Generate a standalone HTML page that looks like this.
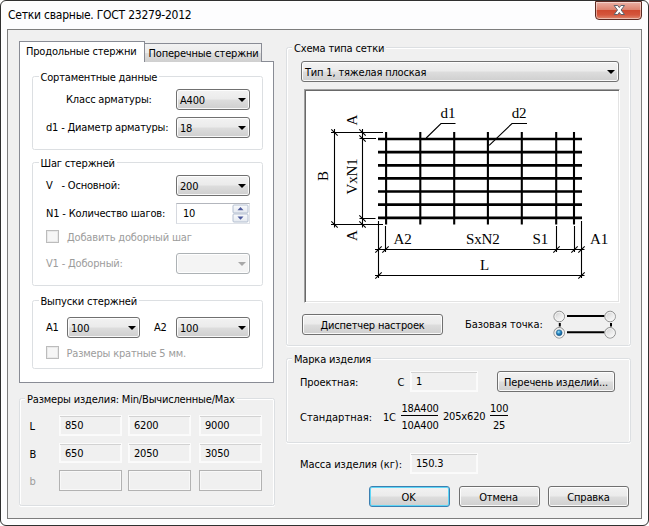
<!DOCTYPE html>
<html lang="ru"><head><meta charset="utf-8"><title>Сетки сварные. ГОСТ 23279-2012</title>
<style>
html,body{margin:0;padding:0;}
body{width:649px;height:526px;overflow:hidden;background:#fff;position:relative;font-family:"DejaVu Sans Condensed","Liberation Sans",sans-serif;font-size:11px;letter-spacing:-0.18px;color:#000;}
*{box-sizing:border-box;}
.abs,.t,.gb,.gl,.cb,.ed,.btn,.chk,.ro,.rd{position:absolute;}
#win{left:0;top:0;width:649px;height:526px;border-radius:6px;background:#fdfdfe;border:1px solid #303030;box-shadow:inset 0 0 0 1px #fff;}
#client{left:7px;top:29px;width:635px;height:490px;background:#f0f0f0;border:1px solid #7d7d7d;}
#title{left:8px;top:8px;font-size:12px;letter-spacing:-0.24px;white-space:nowrap;color:#000;}
.t{white-space:nowrap;line-height:13px;}
.dis{color:#9c9c9c;}
.gb{border:1px solid #dcdfe2;border-radius:2.5px;box-shadow:inset 1px 1px 0 #fff, inset -1px 0 0 #fff, 0 1px 0 #fff;}
.gl{white-space:nowrap;line-height:13px;padding:0 2px;}
.cb{border:1px solid #707070;border-radius:3px;background:linear-gradient(#f2f2f2 0%,#ebebeb 48%,#dddddd 52%,#cfcfcf 100%);box-shadow:inset 0 0 0 1px rgba(255,255,255,.85);padding-left:3px;line-height:21px;white-space:nowrap;}
.cb i{position:absolute;right:3.5px;top:8px;width:0;height:0;border-left:4px solid transparent;border-right:4px solid transparent;border-top:4.5px solid #000;}
.cb.d{border-color:#adb2b5;background:#f4f4f4;}
.cb.d i{border-top-color:#a8a8a8;}
.ed{border:1px solid #dfe2e8;border-top-color:#b3b6bd;border-left-color:#d6d9df;background:#fff;padding-left:6px;line-height:20px;white-space:nowrap;}
.ro{border:1px solid #fbfbfb;background:#f0f0f0;box-shadow:inset 0 1px 0 0 #d2d2d2, inset 0 0 0 1px #fafafa;padding-left:5px;line-height:20px;white-space:nowrap;}
.rd{border:1px solid #b2b2b2;background:#f0f0f0;box-shadow:inset 0 0 0 1px #f8f8f8;}
.btn{border:1px solid #707070;border-radius:3px;background:linear-gradient(#f2f2f2 0%,#ebebeb 48%,#dddddd 52%,#cfcfcf 100%);box-shadow:inset 0 0 0 1px rgba(255,255,255,.85);text-align:center;line-height:21px;white-space:nowrap;}
.btn.def{border-color:#3c7fb1;box-shadow:inset 0 0 0 1px #5fd6f6;}
.chk{width:13px;height:13px;border:1px solid #bcbcbc;background:#f6f6f6;box-shadow:inset 0 0 0 1px #e9e9e9;}
</style></head><body>
<div id="win" class="abs"></div>
<div id="title" class="abs">Сетки сварные. ГОСТ 23279-2012</div>
<div id="close" class="abs" style="left:595px;top:1px;width:47px;height:19px;border:1px solid #5c2a22;border-radius:0 0 4px 4px;background:linear-gradient(#e9b0a4 0%,#dd8470 45%,#cf4a30 50%,#d4553c 75%,#e08a70 100%);box-shadow:inset 0 0 0 1px rgba(255,255,255,.45);">
<svg width="45" height="18" style="position:absolute;left:0;top:0"><path d="M18.10 3.50h3.6L23.30 5.62L24.90 3.50h3.6L25.10 8.00L28.50 12.50h-3.6L23.30 10.38L21.70 12.50h-3.6L21.50 8.00Z" fill="#fff" stroke="#5d626c" stroke-width="1"/></svg></div>
<div id="client" class="abs"></div>

<!-- left tab control -->
<div class="abs" id="pane" style="left:19px;top:61px;width:255px;height:322px;background:#fff;border:1px solid #898c95;"></div>
<div class="abs" id="tab2" style="left:144px;top:43px;width:118px;height:19px;border:1px solid #898c95;border-bottom:none;background:linear-gradient(#f2f2f2 0%,#ebebeb 50%,#dddddd 50%,#cfcfcf 100%);"></div>
<div class="abs" id="tab1" style="left:19px;top:41px;width:126px;height:21px;border:1px solid #898c95;border-bottom:none;background:#fff;"></div>
<div class="t" style="left:26px;top:45px;">Продольные стержни</div>
<div class="t" style="left:148.5px;top:47px;">Поперечные стержни</div>

<div class="gb" style="left:32px;top:76px;width:231px;height:74px;"></div>
<div class="gl" style="left:38.5px;top:71px;background:#fff;">Сортаментные данные</div>
<div class="t" style="left:66px;top:92.5px;">Класс арматуры:</div>
<div class="cb" style="left:176px;top:89px;width:74px;height:21px;">A400<i></i></div>
<div class="t" style="left:46px;top:120.5px;">d1 - Диаметр арматуры:</div>
<div class="cb" style="left:176px;top:117px;width:74px;height:21px;">18<i></i></div>

<div class="gb" style="left:32px;top:162px;width:231px;height:124px;"></div>
<div class="gl" style="left:38.5px;top:157px;background:#fff;">Шаг стержней</div>
<div class="t" style="left:46px;top:179px;">V&nbsp;&nbsp; - Основной:</div>
<div class="cb" style="left:176px;top:175px;width:74px;height:21px;">200<i></i></div>
<div class="t" style="left:46px;top:207px;">N1 - Количество шагов:</div>
<div class="ed" style="left:176px;top:203px;width:74px;height:21px;">10</div>
<svg class="abs" id="spin" style="left:231px;top:203px;" width="19" height="21" viewBox="231 203 19 21">
<defs><linearGradient id="sg" x1="0" y1="0" x2="0" y2="1"><stop offset="0" stop-color="#fafbfd"/><stop offset="1" stop-color="#e3e8ef"/></linearGradient></defs>
<rect x="233" y="205" width="15" height="8" rx="1" fill="url(#sg)" stroke="#b4bfd0" stroke-width="1"/>
<rect x="233" y="214" width="15" height="8" rx="1" fill="url(#sg)" stroke="#b4bfd0" stroke-width="1"/>
<path d="M237.5 210.3h6l-3-3.2zM237.5 216.5h6l-3 3.2z" fill="#4d5a9c"/>
</svg>
<div class="chk" style="left:46px;top:230px;"></div>
<div class="t dis" style="left:67px;top:231px;">Добавить доборный шаг</div>
<div class="t dis" style="left:46px;top:256.5px;">V1 - Доборный:</div>
<div class="cb d" style="left:176px;top:253px;width:74px;height:21px;"><i></i></div>

<div class="gb" style="left:32px;top:300px;width:231px;height:69px;"></div>
<div class="gl" style="left:38.5px;top:295px;background:#fff;">Выпуски стержней</div>
<div class="t" style="left:46px;top:321px;">A1</div>
<div class="cb" style="left:67px;top:317px;width:73px;height:21px;">100<i></i></div>
<div class="t" style="left:154px;top:321px;">A2</div>
<div class="cb" style="left:176px;top:317px;width:74px;height:21px;">100<i></i></div>
<div class="chk" style="left:46px;top:346px;"></div>
<div class="t dis" style="left:66.5px;top:347px;">Размеры кратные 5 мм.</div>

<!-- sizes group -->
<div class="gb" style="left:19px;top:398px;width:256px;height:108px;"></div>
<div class="gl" style="left:25px;top:393px;background:#f0f0f0;">Размеры изделия: Min/Вычисленные/Max</div>
<div class="t" style="left:29.5px;top:420px;">L</div>
<div class="t" style="left:29.5px;top:447.5px;">B</div>
<div class="t dis" style="left:29.5px;top:475px;">b</div>
<div class="ro" style="left:59px;top:415px;width:63px;height:21px;">850</div>
<div class="ro" style="left:128px;top:415px;width:63px;height:21px;">6200</div>
<div class="ro" style="left:199px;top:415px;width:63px;height:21px;">9000</div>
<div class="ro" style="left:59px;top:443px;width:63px;height:20px;">650</div>
<div class="ro" style="left:128px;top:443px;width:63px;height:20px;">2050</div>
<div class="ro" style="left:199px;top:443px;width:63px;height:20px;">3050</div>
<div class="rd" style="left:59px;top:470px;width:63px;height:21px;"></div>
<div class="rd" style="left:128px;top:470px;width:63px;height:21px;"></div>
<div class="rd" style="left:199px;top:470px;width:63px;height:21px;"></div>

<!-- right: scheme group -->
<div class="gb" style="left:286px;top:47px;width:345px;height:299px;"></div>
<div class="gl" style="left:292px;top:42px;background:#f0f0f0;">Схема типа сетки</div>
<div class="cb" style="left:301px;top:61px;width:318px;height:21px;">Тип 1, тяжелая плоская<i></i></div>
<div class="abs" id="pic" style="left:304px;top:89px;width:316px;height:214px;background:#fff;border:1px solid;border-color:#a0a0a0 #fff #fff #a0a0a0;box-shadow:inset 1px 1px 0 #696969, inset -1px -1px 0 #e3e3e3;"></div>
<svg class="abs" id="draw" style="left:304px;top:89px;" width="315" height="214" viewBox="304 89 315 214" font-family="'Liberation Serif',serif" font-size="15px" fill="#000">
<g stroke="#000" stroke-width="2.7" fill="none">
<path d="M378 139.0H582"/><path d="M378 152.1H582"/><path d="M378 165.3H582"/><path d="M378 178.4H582"/><path d="M378 191.5H582"/><path d="M378 204.7H582"/><path d="M378 217.8H582"/></g>
<g stroke="#000" stroke-width="2.1" fill="none"><path d="M386.1 132V224.5"/><path d="M420.3 132V224.5"/><path d="M454.2 132V224.5"/><path d="M487.9 132V224.5"/><path d="M521.8 132V224.5"/><path d="M556.2 132V224.5"/><path d="M574 132V224.5"/></g>
<g stroke="#000" stroke-width="1.1" fill="none"><path d="M331 132.5H383M359.5 138.5H376M359.5 218.5H375.5M331 224.5H383"/><path d="M334.5 129V227.5M362.5 129V227.5"/><path d="M426.2 138L441 123.5H455.5M489.2 145.4L512 123.5H527"/><path d="M378.5 221V278M385.5 226V252M556.5 226V252M574.5 226V252M581.5 221V278"/><path d="M375 249.5H584.5M375 275.5H584.5"/><path d="M331.3 129.3L337.7 135.7"/><path d="M359.3 129.3L365.7 135.7"/><path d="M359.3 135.3L365.7 141.7"/><path d="M359.3 215.3L365.7 221.7"/><path d="M359.3 221.3L365.7 227.7"/><path d="M331.3 221.3L337.7 227.7"/><path d="M375.3 252.7L381.7 246.3"/><path d="M382.3 252.7L388.7 246.3"/><path d="M553.3 252.7L559.7 246.3"/><path d="M571.3 252.7L577.7 246.3"/><path d="M578.3 252.7L584.7 246.3"/><path d="M375.3 278.7L381.7 272.3"/><path d="M578.3 278.7L584.7 272.3"/></g>
<text x="440.6" y="117.7">d1</text><text x="511.8" y="117.7">d2</text><text x="393.5" y="243.8">A2</text><text x="466" y="243.8">SxN2</text><text x="532.5" y="243.8">S1</text><text x="590" y="243.8">A1</text><text x="480" y="269.8">L</text><text transform="translate(356.8 125.6) rotate(-90)">A</text><text transform="translate(356.8 241) rotate(-90)">A</text><text transform="translate(328.4 181) rotate(-90)">B</text><text transform="translate(356.8 194.5) rotate(-90)">VxN1</text></svg>
<svg class="abs" id="radio" style="left:550px;top:308px;" width="70" height="34" viewBox="550 308 70 34">
<defs><linearGradient id="rg" x1="0" y1="0" x2="0.7" y2="1"><stop offset="0" stop-color="#c4c4c4"/><stop offset="0.5" stop-color="#e6e6e6"/><stop offset="1" stop-color="#fbfbfb"/></linearGradient>
<radialGradient id="bd" cx="0.4" cy="0.35" r="0.7"><stop offset="0" stop-color="#a6e6fb"/><stop offset="0.45" stop-color="#2a8ac4"/><stop offset="1" stop-color="#0d4f86"/></radialGradient></defs>
<g stroke="#000" stroke-width="2" fill="none"><path d="M567 316H604.5M567 332.3H604.5"/><path d="M559.8 323V326.4M611 323V326.4"/></g>
<g stroke="#8e8f8f" stroke-width="1" fill="url(#rg)"><circle cx="559.2" cy="316.5" r="5.3"/><circle cx="610.1" cy="316.5" r="5.3"/><circle cx="559.2" cy="332.8" r="5.3"/><circle cx="610.1" cy="332.8" r="5.3"/></g>
<g stroke="#f4f4f4" stroke-width="1" fill="none"><circle cx="559.2" cy="316.5" r="4.2"/><circle cx="610.1" cy="316.5" r="4.2"/><circle cx="559.2" cy="332.8" r="4.2"/><circle cx="610.1" cy="332.8" r="4.2"/></g>
<circle cx="559.2" cy="332.8" r="2.9" fill="url(#bd)" stroke="#1d5f90" stroke-width="0.6"/>
</svg>
<div class="btn" style="left:302px;top:314px;width:141px;height:21px;">Диспетчер настроек</div>
<div class="t" style="left:465px;top:318px;letter-spacing:-0.03px;">Базовая точка:</div>

<!-- mark group -->
<div class="gb" style="left:286px;top:358px;width:345px;height:85px;"></div>
<div class="gl" style="left:292px;top:353px;background:#f0f0f0;">Марка изделия</div>
<div class="t" style="left:300px;top:375.5px;letter-spacing:-0.12px;">Проектная:</div>
<div class="t" style="left:397.5px;top:375.5px;">С</div>
<div class="ro" style="left:410px;top:371px;width:68px;height:21px;">1</div>
<div class="btn" style="left:497px;top:371px;width:118px;height:21px;letter-spacing:-0.14px;">Перечень изделий...</div>
<div class="t" style="left:300px;top:410.5px;letter-spacing:0px;">Стандартная:</div>
<div class="t" style="left:383px;top:410.5px;">1С</div>
<div class="t" style="left:401.5px;top:402px;">18А400</div>
<div class="abs" style="left:401px;top:415px;width:37px;height:1px;background:#000;"></div>
<div class="t" style="left:401.5px;top:418.5px;">10А400</div>
<div class="t" style="left:443px;top:410px;">205x620</div>
<div class="t" style="left:490px;top:402px;">100</div>
<div class="abs" style="left:490px;top:415px;width:18px;height:1px;background:#000;"></div>
<div class="t" style="left:493px;top:418.5px;">25</div>

<div class="t" style="left:300px;top:458px;letter-spacing:-0.08px;">Масса изделия (кг):</div>
<div class="ro" style="left:410px;top:453px;width:68px;height:21px;">150.3</div>

<div class="btn def" style="left:369px;top:486px;width:81px;height:21px;padding-right:2px;">OK</div>
<div class="btn" style="left:459px;top:486px;width:81px;height:21px;padding-right:2px;">Отмена</div>
<div class="btn" style="left:548px;top:486px;width:81px;height:21px;">Справка</div>
</body></html>
